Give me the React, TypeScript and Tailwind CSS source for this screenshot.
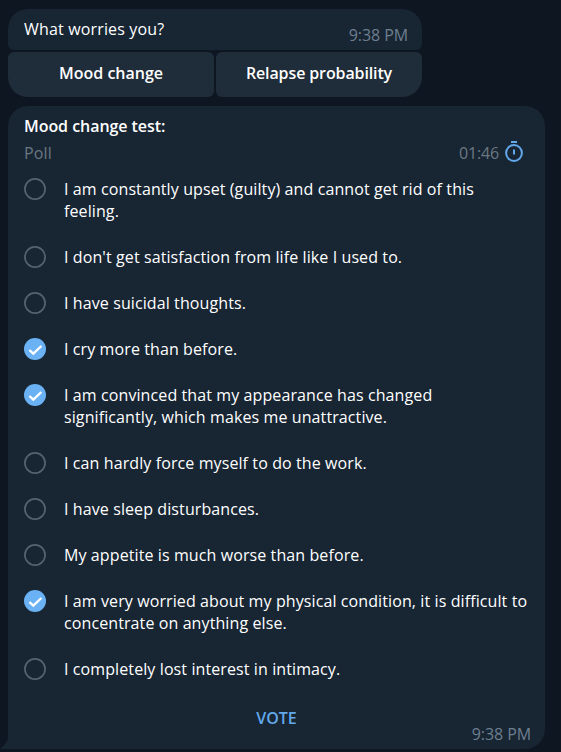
const options: { text: string; checked?: boolean }[] = [
  { text: "I am constantly upset (guilty) and cannot get rid of this feeling." },
  { text: "I don't get satisfaction from life like I used to." },
  { text: "I have suicidal thoughts." },
  { text: "I cry more than before.", checked: true },
  { text: "I am convinced that my appearance has changed significantly, which makes me unattractive.", checked: true },
  { text: "I can hardly force myself to do the work." },
  { text: "I have sleep disturbances." },
  { text: "My appetite is much worse than before." },
  { text: "I am very worried about my physical condition, it is difficult to concentrate on anything else.", checked: true },
  { text: "I completely lost interest in intimacy." },
];

function Mark({ checked }: { checked?: boolean }) {
  return (
    <svg className="size-[22px] shrink-0" viewBox="0 0 22 22" fill="none">
      {checked ? (
        <>
          <circle cx="11" cy="11" r="11" fill="#6ab2f4" />
          <path d="M5.4 12 9.3 15.7 17.4 8" stroke="#fff" strokeWidth="2.3" />
        </>
      ) : (
        <circle cx="11" cy="11" r="10.1" stroke="#54636f" strokeWidth="1.7" />
      )}
    </svg>
  );
}

function Stopwatch() {
  return (
    <svg className="-mt-1 h-[22px] w-[18px]" viewBox="0 0 18 22" fill="none" stroke="#62a8ea" strokeWidth="2">
      <path d="M6 2h6M9 9.5v5" />
      <circle cx="9" cy="13" r="7.9" />
    </svg>
  );
}

export default function App() {
  return (
    <div className="h-[752px] w-[561px] overflow-hidden bg-[#0e1621] pl-2 pt-[9px] font-['Open_Sans',sans-serif] text-base leading-[22px] text-white">
      <div className="w-[414px]">
        <div className="flex h-[41px] justify-between rounded-t-[20px] rounded-b-[6px] bg-[#182533] pl-4 pr-3.5">
          <span className="pt-[9px] tracking-[0.16px]">What worries you?</span>
          <span className="pt-[15px] tracking-[-0.08px] text-[#6d7f8f]">9:38 PM</span>
        </div>
        <div className="mt-0.5 grid grid-cols-2 gap-0.5 font-semibold">
          <button className="h-[45px] rounded-[6px] rounded-bl-[20px] bg-[#1f2c39] pb-[3px]">Mood change</button>
          <button className="h-[45px] rounded-[6px] rounded-br-[20px] bg-[#1f2c39] pb-[3px] tracking-[-0.12px]">Relapse probability</button>
        </div>
      </div>

      <div className="relative mt-[9px] h-[643px] w-[537px] rounded-[20px] rounded-bl-none bg-[#182533] pt-[9px]">
        <svg className="absolute bottom-0 -left-2 h-[14px] w-2" viewBox="0 0 8 14">
          <path d="M8 0C8 6 5 10.5 1 12.8Q0 13.6 1.2 14H8Z" fill="#182533" />
        </svg>
        <h1 className="pl-4 font-semibold tracking-[-0.05px]">Mood change test:</h1>
        <div className="mt-[5px] flex h-[22px] items-center justify-between pl-4 pr-[22px] text-[#6b7883]">
          <span className="tracking-[0.15px]">Poll</span>
          <div className="flex items-center gap-1.5">
            <span className="tracking-[-0.15px]">01:46</span>
            <Stopwatch />
          </div>
        </div>
        <ul className="mt-[2px] tracking-[0.1px]">
          {options.map((o) => (
            <li key={o.text} className="flex gap-[18px] py-3 pl-4 pr-[17px]">
              <Mark checked={o.checked} />
              <span>{o.text}</span>
            </li>
          ))}
        </ul>
        <div className="mt-[15px] text-center font-semibold text-[#62a8ea]">VOTE</div>
        <div className="-mt-[6px] pr-3.5 text-right tracking-[-0.08px] text-[#6d7f8f]">9:38 PM</div>
      </div>
    </div>
  );
}
